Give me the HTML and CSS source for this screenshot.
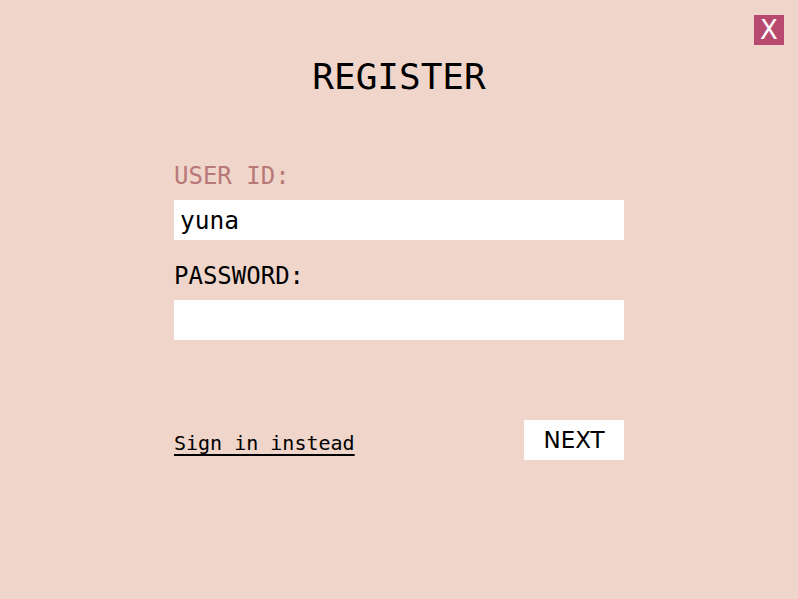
FILE: index.html
```html
<!DOCTYPE html>
<html>
<head>
<meta charset="utf-8">
<link rel="stylesheet" href="styles.css">
</head>
<body>
<div class="page">
  <button class="close" aria-label="Close">X</button>
  <h1 class="title">REGISTER</h1>
  <form class="form">
    <label class="label label-active">USER ID:</label>
    <div class="input">yuna</div>
    <label class="label">PASSWORD:</label>
    <div class="input"></div>
    <div class="actions">
      <a class="link" href="#">Sign in instead</a>
      <button type="button" class="next">NEXT</button>
    </div>
  </form>
</div>
</body>
</html>
```
FILE: styles.css
```css
html, body {
  margin: 0;
  padding: 0;
  background: #efd5ca;
}
.page {
  position: relative;
  width: 798px;
  height: 599px;
  font-family: "DejaVu Sans Mono", monospace;
  color: #000;
}
.close {
  position: absolute;
  top: 15px;
  right: 14px;
  width: 30px;
  height: 30px;
  border: 0;
  padding: 0;
  background: #b84a70;
  color: #fff;
  font-family: "DejaVu Sans", sans-serif;
  font-size: 26px;
  line-height: 30px;
  text-align: center;
}
.title {
  margin: 0;
  padding-top: 55px;
  font-weight: normal;
  font-size: 36px;
  line-height: 44px;
  text-align: center;
}
.form {
  width: 450px;
  margin: 0 auto;
  padding-top: 57px;
  display: flex;
  flex-direction: column;
}
.label {
  font-size: 24px;
  line-height: 40px;
  height: 40px;
  padding-bottom: 4px;
}
.label-active {
  color: #b97878;
}
.input {
  box-sizing: border-box;
  height: 40px;
  background: #fff;
  font-size: 24.5px;
  line-height: 38px;
  padding-top: 2px;
  padding-left: 6px;
  margin-bottom: 16px;
}
.actions {
  margin-top: 64px;
  display: flex;
  justify-content: space-between;
  align-items: center;
}
.link {
  color: #000;
  font-size: 20px;
  text-decoration: underline;
  text-decoration-thickness: 2px;
  text-underline-offset: 4px;
  padding-top: 6px;
}
.next {
  width: 100px;
  height: 40px;
  border: 0;
  background: #fff;
  color: #000;
  font-family: "DejaVu Sans", sans-serif;
  font-size: 23px;
  padding: 0;
}
```
